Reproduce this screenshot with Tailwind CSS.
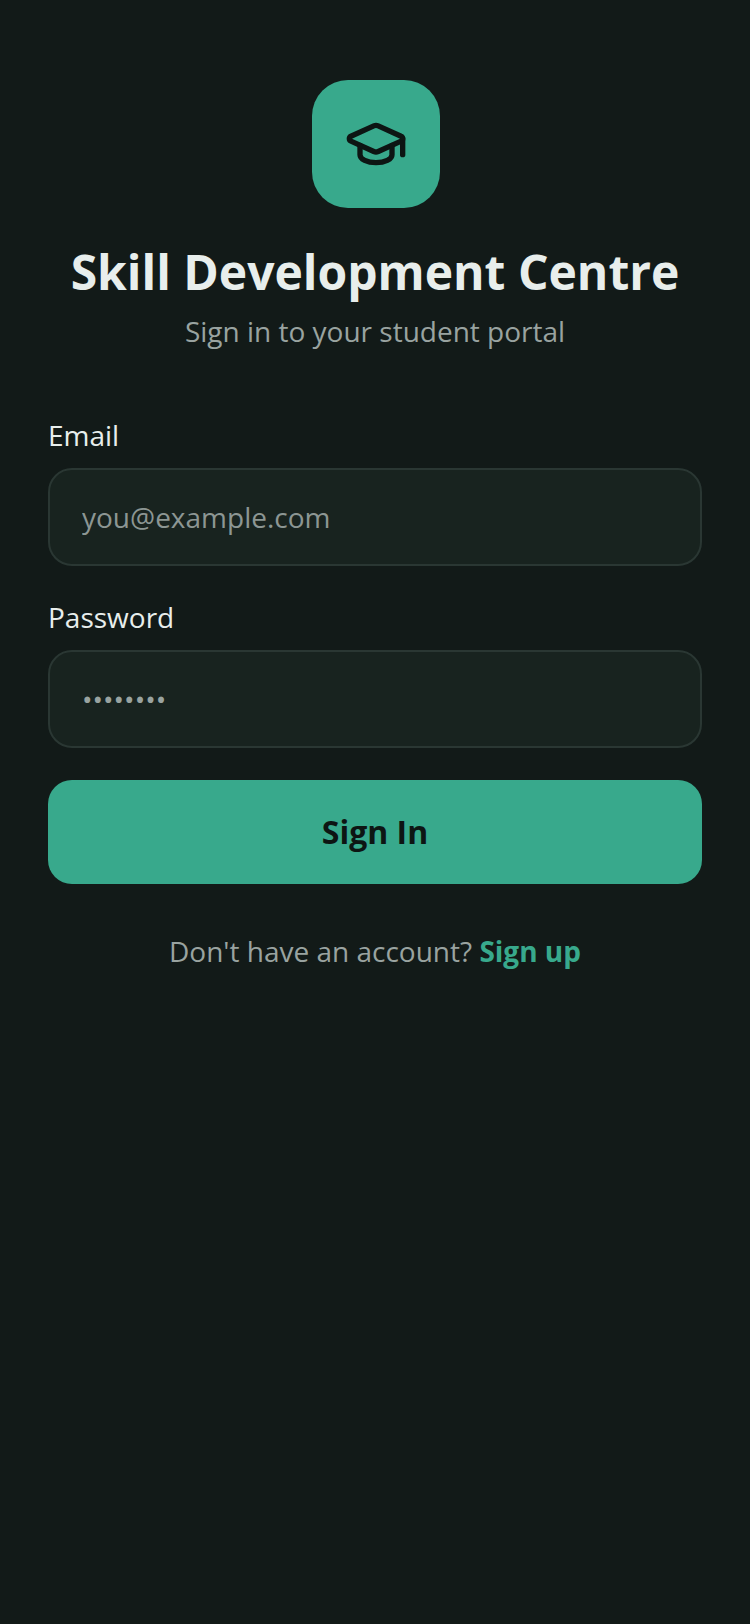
<!DOCTYPE html>
<html lang="en">
<head>
    <meta charset="UTF-8">
    <meta name="viewport" content="width=device-width, initial-scale=1.0">
    <script src="https://cdn.jsdelivr.net/npm/@tailwindcss/browser@4"></script>
    <title>Sign in</title>
</head>
<body class="bg-[#121a18] font-['Open_Sans',sans-serif] overflow-hidden">
    <div class="w-[750px] h-[1624px] px-12 pt-20">
        <div class="flex flex-col items-center">
            <div class="w-32 h-32 ml-[2px] rounded-[36px] bg-[#38a98c] flex items-center justify-center">
                <svg class="w-16 h-16 text-[#0d1513]" xmlns="http://www.w3.org/2000/svg" viewBox="0 0 24 24" fill="none" stroke="currentColor" stroke-width="2" stroke-linecap="round" stroke-linejoin="round"><path d="M21.42 10.922a1 1 0 0 0-.019-1.838L12.83 5.18a2 2 0 0 0-1.66 0L2.6 9.08a1 1 0 0 0 0 1.832l8.57 3.908a2 2 0 0 0 1.66 0z"/><path d="M22 10v6"/><path d="M6 12.5V16a6 3 0 0 0 12 0v-3.5"/></svg>
            </div>
            <h1 class="mt-8 text-[48px] leading-[64px] font-bold text-[#e8eeec] whitespace-nowrap">Skill Development Centre</h1>
            <p class="mt-[7px] text-[28px] leading-10 text-[#99a3a0]">Sign in to your student portal</p>
        </div>
        <form class="mt-16">
            <label class="block text-[28px] leading-10 text-[#e8eeec]" for="email">Email</label>
            <input class="mt-[13px] block w-full h-[98px] px-8 text-[28px] rounded-3xl border-2 border-[#2a3733] bg-[#18231f] outline-0 text-[#e8eeec] placeholder:text-[#8c9693]" id="email" type="text" placeholder="you@example.com">
            <label class="mt-[31px] block text-[28px] leading-10 text-[#e8eeec]" for="password">Password</label>
            <input class="mt-[13px] block w-full h-[98px] px-8 text-[28px] rounded-3xl border-2 border-[#2a3733] bg-[#18231f] outline-0 text-[#99a3a0]" id="password" type="password" value="password">
            <button class="mt-8 block w-full h-[104px] rounded-3xl bg-[#38a98c] text-[32px] font-bold text-[#0d1513]" type="button">Sign In</button>
        </form>
        <p class="mt-[47px] text-center text-[28px] leading-10 text-[#99a3a0]">Don't have an account? <a class="font-bold text-[#38a98c]" href="#">Sign up</a></p>
    </div>
</body>
</html>
